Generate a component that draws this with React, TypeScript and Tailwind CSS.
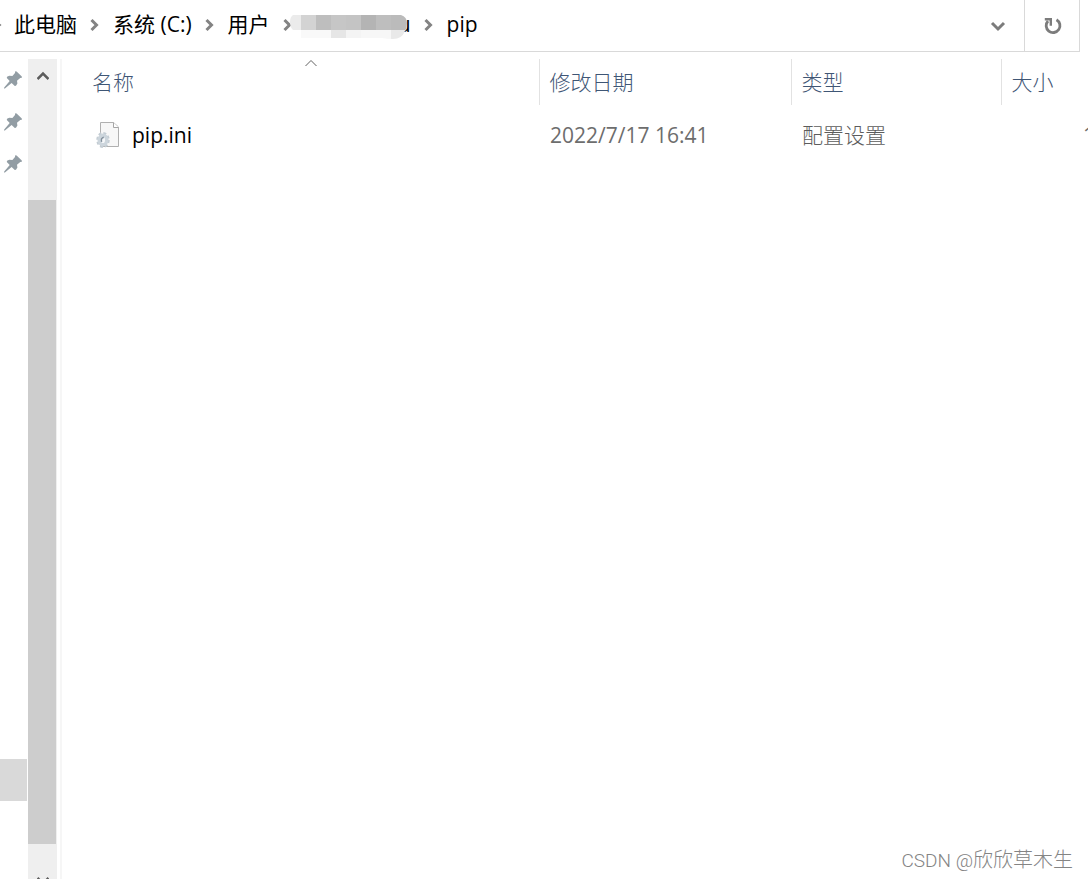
import { useState } from "react";

const files = [{ name: "pip.ini", date: "2022/7/17 16:41", type: "配置设置", size: "1 KB" }];

// Blurred part of the user name: [x, width, colour]
const mosaicTop: [number, number, string][] = [
  [0, 11, "#ebebeb"],
  [11, 15, "#d3d3d3"],
  [26, 15, "#bebebe"],
  [41, 15, "#c6c6c6"],
  [56, 15, "#c4c4c4"],
  [71, 15, "#b4b4b4"],
  [86, 15, "#bebebe"],
  [101, 15, "#bbbbbb"],
];

const mosaicBottom: [number, number, string][] = [
  [11, 30, "#f9f9f9"],
  [41, 15, "#e6e6e6"],
  [56, 15, "#f4f4f4"],
  [71, 30, "#f7f7f7"],
  [101, 15, "#e9e9e9"],
];

function Separator() {
  return (
    <svg width="36" height="20" viewBox="0 0 36 20" fill="none" className="shrink-0" aria-hidden="true">
      <path d="M14.5 6L19.5 11L14.5 16" stroke="#838383" strokeWidth="3" />
    </svg>
  );
}

function Mosaic() {
  return (
    <svg width="117" height="25" viewBox="0 0 117 25" className="absolute top-1 -left-4" aria-hidden="true">
      <defs>
        <clipPath id="smudge">
          <path d="M3 1H111Q117 3 117 9Q117 14 115 17Q112 25 103 25Q96 25 92 24H11V16H3Q0 13 0 8Q0 3 3 1Z" />
        </clipPath>
      </defs>
      <g clipPath="url(#smudge)">
        {mosaicTop.map(([x, w, fill]) => (
          <rect key={x} x={x} y="0" width={w + 1} height="16" fill={fill} />
        ))}
        {mosaicBottom.map(([x, w, fill]) => (
          <rect key={x} x={x} y="16" width={w + 1} height="9" fill={fill} />
        ))}
      </g>
    </svg>
  );
}

function Pin() {
  return (
    <svg width="20" height="20" viewBox="0 0 20 20" aria-hidden="true">
      <path
        d="M12.2 1.2L13.6 1.4L18.8 6.5L18.9 7.7L17.2 7.9L14 10.7L14.4 13.6L13 15.8L11.8 15.9L8.6 13L1.9 18.6L1 18.5L1.2 17.6L6.7 11L3.8 8L4 6.7L6.3 5.8L9.4 6L12 3Z"
        fill="#929da4"
      />
    </svg>
  );
}

function FileIcon() {
  return (
    <svg width="28" height="28" viewBox="0 0 28 28" fill="none" aria-hidden="true">
      <path d="M6.5 1.5H19.5L24.5 6V25.5H6.5Z" fill="#f7f7f7" stroke="#b0b0b0" />
      <path d="M19.5 1.5V6.5H24.5" fill="#ffffff" stroke="#a5a5a5" />
      <ellipse cx="9" cy="19" rx="5.2" ry="6.6" stroke="#c3ccd3" strokeWidth="3" strokeDasharray="2.7 1.95" />
      <ellipse cx="9" cy="19" rx="3.8" ry="4.8" fill="#f4f6f8" stroke="#ccd5dc" strokeWidth="3.4" />
      <path d="M9.8 16.2Q6.6 16.8 7.6 20.8" stroke="#82909c" strokeWidth="1.4" />
    </svg>
  );
}

function ScrollArrow({ down = false }: { down?: boolean }) {
  return (
    <svg width="12" height="10" viewBox="0 0 12 10" fill="none" aria-hidden="true">
      <path d={down ? "M0.5 2L6 7.5L11.5 2" : "M0.5 8L6 2.5L11.5 8"} stroke="#5c5c5c" strokeWidth="2.5" />
    </svg>
  );
}

export default function App() {
  const [ascending, setAscending] = useState(true);
  const rows = ascending ? files : [...files].reverse();

  return (
    <div className="relative flex h-screen flex-col overflow-hidden bg-white font-['Open_Sans','Noto_Sans_CJK_SC',sans-serif] text-[21px] leading-7 text-black">
      {/* Address bar */}
      <header className="mr-2 flex h-[52px] shrink-0 border-r border-b border-[#d9d9d9]">
        <nav aria-label="路径" className="flex h-12 flex-1 items-center whitespace-nowrap">
          <svg width="14" height="20" viewBox="0 0 14 20" fill="none" aria-hidden="true">
            <path d="M-6 6L0 11L-6 16" stroke="#838383" strokeWidth="2" />
          </svg>
          <a href="#pc">此电脑</a>
          <Separator />
          <a href="#c">系统 (C:)</a>
          <Separator />
          <a href="#users">用户</a>
          <Separator />
          <a href="#user" className="relative w-[105px] text-right">
            u
            <Mosaic />
          </a>
          <Separator />
          <a href="#pip">pip</a>
        </nav>
        <button type="button" aria-label="展开" className="flex w-[52px] items-center justify-center">
          <svg width="16" height="12" viewBox="0 0 16 12" fill="none" aria-hidden="true">
            <path d="M2 3L8 9L14 3" stroke="#7c7c7c" strokeWidth="3" />
          </svg>
        </button>
        <button
          type="button"
          aria-label="刷新"
          className="flex w-[55px] items-center justify-center border-l border-[#d9d9d9]"
        >
          <svg width="20" height="20" viewBox="0 0 20 20" fill="none" aria-hidden="true">
            <path d="M14.5 3.7A6.9 6.9 0 1 1 6 5" stroke="#7c7c7c" strokeWidth="2.8" />
            <path d="M2.8 3.2H8.8V9.8" stroke="#7c7c7c" strokeWidth="2.4" />
          </svg>
        </button>
      </header>

      <div className="flex min-h-0 flex-1 pt-[7px]">
        {/* Quick access */}
        <aside className="flex w-7 shrink-0 flex-col pr-px">
          {[1, 2, 3].map((n) => (
            <button key={n} type="button" aria-label={`固定 ${n}`} className="flex h-[42px] items-center pl-[3px]">
              <Pin />
            </button>
          ))}
          <div className="flex-1" />
          <div className="mb-[78px] h-[42px] bg-[#d9d9d9]" />
        </aside>

        {/* Scrollbar */}
        <div className="flex w-[29px] shrink-0 flex-col bg-[#efefef]">
          <button type="button" aria-label="向上" className="flex h-[34px] items-center justify-center">
            <ScrollArrow />
          </button>
          <div className="mt-[107px] mr-px flex-1 bg-[#cdcdcd]" />
          <button type="button" aria-label="向下" className="flex h-[35px] items-start justify-center overflow-hidden pt-8">
            <ScrollArrow down />
          </button>
        </div>

        <main className="ml-[3px] min-w-0 flex-1 overflow-hidden border-l-2 border-[#f6f6f6]">
          <table className="w-full min-w-[1075px] table-fixed border-collapse text-left">
            <colgroup>
              <col className="w-[477px]" />
              <col className="w-[252px]" />
              <col className="w-[210px]" />
              <col />
            </colgroup>
            <thead>
              <tr className="h-[46px] text-[#3f5675]">
                <th className="relative border-r border-[#e2e2e2] p-0 pl-[30px] font-light">
                  <button type="button" onClick={() => setAscending(!ascending)}>
                    名称
                    <svg
                      width="12"
                      height="8"
                      viewBox="0 0 12 8"
                      fill="none"
                      className="absolute top-0 left-1/2 ml-[5px]"
                      aria-hidden="true"
                    >
                      <path d={ascending ? "M0.5 7L6 1.5L11.5 7" : "M0.5 1.5L6 7L11.5 1.5"} stroke="#606060" />
                    </svg>
                  </button>
                </th>
                <th className="border-r border-[#e2e2e2] p-0 pl-[10px] font-light">修改日期</th>
                <th className="border-r border-[#e2e2e2] p-0 pl-[10px] font-light">类型</th>
                <th className="p-0 pl-[10px] font-light">大小</th>
              </tr>
            </thead>
            <tbody>
              {rows.map((file) => (
                <tr key={file.name} className="h-[60px] text-[#6d6d6d]">
                  <td className="p-0 pl-8">
                    <div className="flex items-center gap-[10px] text-black">
                      <FileIcon />
                      <span>{file.name}</span>
                    </div>
                  </td>
                  <td className="p-0 pl-[11px]">{file.date}</td>
                  <td className="p-0 pl-[11px] font-light text-[#5c5c5c]">{file.type}</td>
                  <td className="p-0 pr-[10px] text-right">{file.size}</td>
                </tr>
              ))}
            </tbody>
          </table>
        </main>
      </div>

      <p className="absolute right-[15px] bottom-1 font-[Roboto,'Noto_Sans_CJK_SC',sans-serif] text-[20px] font-light text-[#848484]">
        <span className="text-[19px]">CSDN @</span>欣欣草木生
      </p>
    </div>
  );
}
